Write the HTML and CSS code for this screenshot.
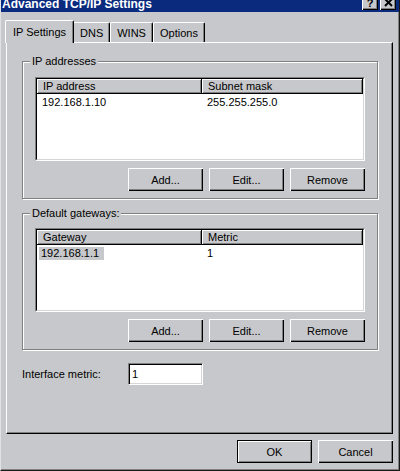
FILE: index.html
```html
<!DOCTYPE html>
<html>
  <head>
  <title>Advanced TCP/IP Settings</title>
  <link rel="stylesheet" href="styles.css">
</head>
  <body>
    <div class="window">
      <div class="titlebar">
        <span class="title">Advanced TCP/IP Settings</span>
        <span class="caption-btns">
          <span class="cap-btn">?</span>
          <span class="cap-btn">
            <svg width="9" height="8" viewBox="0 0 9 8"><path d="M1 0 L8 7 M8 0 L1 7" stroke="#000" stroke-width="2"/></svg>
          </span>
        </span>
      </div>
      <div class="main">
        <div class="tabs">
          <div class="tab active">IP Settings</div>
          <div class="tab">DNS</div>
          <div class="tab">WINS</div>
          <div class="tab">Options</div>
        </div>
        <div class="panel">
          <div class="group">
            <div class="group-title">IP addresses</div>
            <div class="listview">
              <div class="lv-body">
                <div class="lv-head">
                  <div class="col c1">IP address</div>
                  <div class="col c2">Subnet mask</div>
                </div>
                <div class="lv-row">
                  <div class="cell c1">192.168.1.10</div>
                  <div class="cell c2">255.255.255.0</div>
                </div>
              </div>
            </div>
            <div class="btn-row">
              <button class="btn">Add...</button>
              <button class="btn">Edit...</button>
              <button class="btn">Remove</button>
            </div>
          </div>

          <div class="group group-gw">
            <div class="group-title">Default gateways:</div>
            <div class="listview">
              <div class="lv-body">
                <div class="lv-head">
                  <div class="col c1">Gateway</div>
                  <div class="col c2">Metric</div>
                </div>
                <div class="lv-row">
                  <div class="cell c1 sel-cell"><span class="sel">192.168.1.1</span></div>
                  <div class="cell c2">1</div>
                </div>
              </div>
            </div>
            <div class="btn-row">
              <button class="btn">Add...</button>
              <button class="btn">Edit...</button>
              <button class="btn">Remove</button>
            </div>
          </div>

          <div class="metric-row">
            <label class="metric-label">Interface metric:</label>
            <div class="textbox">1</div>
          </div>
        </div>
        <div class="dialog-btns">
          <button class="btn default">OK</button>
          <button class="btn">Cancel</button>
        </div>
      </div>
    </div>
  </body>
</html>
```

FILE: styles.css
```css
body{
  margin:0;
  background:#c7c8cb;
  font-family:"Liberation Sans", Arial, sans-serif;
  font-size:11px;
  color:#000;
}

.window{
  width:400px;
  height:471px;
  box-sizing:border-box;
  border-left:1px solid #e2e2e2;
  border-right:1px solid #1a1a1a;
  border-bottom:1px solid #1a1a1a;
  box-shadow:inset -1px -1px 0 #808080;
  overflow:hidden;
}

/* title bar, cut at the top like the screenshot */
.titlebar{
  height:12px;
  background:#0a2a7e;
  display:flex;
  align-items:flex-end;
  justify-content:space-between;
  overflow:hidden;
}
.title{
  color:#fff;
  font-weight:bold;
  font-size:12px;
  line-height:14px;
  margin:0 0 1px 1px;
  white-space:nowrap;
}
.caption-btns{
  display:flex;
  gap:2px;
  margin:0 3px 2px 0;
}
.cap-btn{
  width:16px;
  height:14px;
  box-sizing:border-box;
  background:#c7c8cb;
  box-shadow:inset 1px 1px 0 #fff, inset -1px -1px 0 #000, inset -2px -2px 0 #808080;
  font-weight:bold;
  font-size:11px;
  display:flex;
  align-items:center;
  justify-content:center;
}

.main{
  padding:0 6px 0 5px;
}

/* tabs */
.tabs{
  display:flex;
  align-items:flex-end;
  height:30px;
}
.tab{
  height:20px;
  box-sizing:border-box;
  padding:4px 6px 0;
  line-height:13px;
  border-top:1px solid #fff;
  border-left:1px solid #fff;
  border-right:1px solid #000;
  box-shadow:inset -1px 0 0 #808080;
  border-radius:2px 2px 0 0;
  white-space:nowrap;
}
.tab.active{
  position:relative;
  z-index:1;
  height:23px;
  padding:5px 7px 0;
  margin:0 -1px -1px -1px;
  background:#c7c8cb;
  box-shadow:inset -1px 0 0 #808080;
}

.panel{
  height:392px;
  box-sizing:border-box;
  border:1px solid;
  border-color:#fff #000 #000 #fff;
  box-shadow:inset -1px -1px 0 #808080;
  padding:18px 14px 0 15px;
}

/* etched group boxes */
.group{
  border:1px solid #808080;
  box-shadow:inset 1px 1px 0 #fff, 1px 1px 0 #fff;
  padding:0 12px 7px 12px;
}
.group-gw{
  margin-top:14px;
}
.group-title{
  width:max-content;
  margin:-7px 0 0 -5px;
  padding:0 2px;
  line-height:13px;
  background:#c7c8cb;
}

/* list views */
.listview{
  height:84px;
  box-sizing:border-box;
  margin-top:9px;
  border:1px solid;
  border-color:#808080 #fff #fff #808080;
}
.group-gw .listview{
  margin-top:8px;
}
.lv-body{
  height:100%;
  box-sizing:border-box;
  border:1px solid;
  border-color:#000 #d6d6d6 #d6d6d6 #000;
  background:#fff;
}
.lv-head{
  display:flex;
}
.lv-head .col{
  height:15px;
  box-sizing:border-box;
  padding:1px 6px 0;
  line-height:13px;
  background:#c7c8cb;
  border-right:1px solid #000;
  border-bottom:1px solid #000;
  box-shadow:inset 1px 1px 0 #fff, inset -1px -1px 0 #808080;
}
.c1{ width:165px; box-sizing:border-box; }
.c2{ width:161px; box-sizing:border-box; }

.lv-row{
  display:flex;
  padding-top:2px;
  line-height:13px;
}
.lv-row .cell{
  padding-left:5px;
}
.lv-row .sel-cell{
  padding-left:2px;
}
.sel{
  display:inline-block;
  padding:0 5px 0 2px;
  background:#c7c8cb;
}

/* buttons */
.btn-row{
  display:flex;
  justify-content:flex-end;
  gap:6px;
  margin-top:7px;
}
.btn{
  width:75px;
  height:23px;
  box-sizing:border-box;
  border:0;
  padding:0;
  background:#c7c8cb;
  font-family:inherit;
  font-size:11px;
  color:#000;
  box-shadow:inset 1px 1px 0 #fff, inset -1px -1px 0 #000, inset -2px -2px 0 #808080;
}
.btn.default{
  border:1px solid #000;
  box-shadow:inset 1px 1px 0 #fff, inset -1px -1px 0 #808080;
}

.metric-row{
  display:flex;
  align-items:center;
  margin-top:13px;
}
.metric-label{
  width:106px;
}
.textbox{
  width:75px;
  height:22px;
  box-sizing:border-box;
  border:1px solid;
  border-color:#808080 #fff #fff #808080;
  background:#fff;
  box-shadow:inset 1px 1px 0 #000, inset -1px -1px 0 #d6d6d6;
  padding-left:3px;
  line-height:20px;
}

.dialog-btns{
  display:flex;
  justify-content:flex-end;
  gap:6px;
  margin-top:6px;
}
```
